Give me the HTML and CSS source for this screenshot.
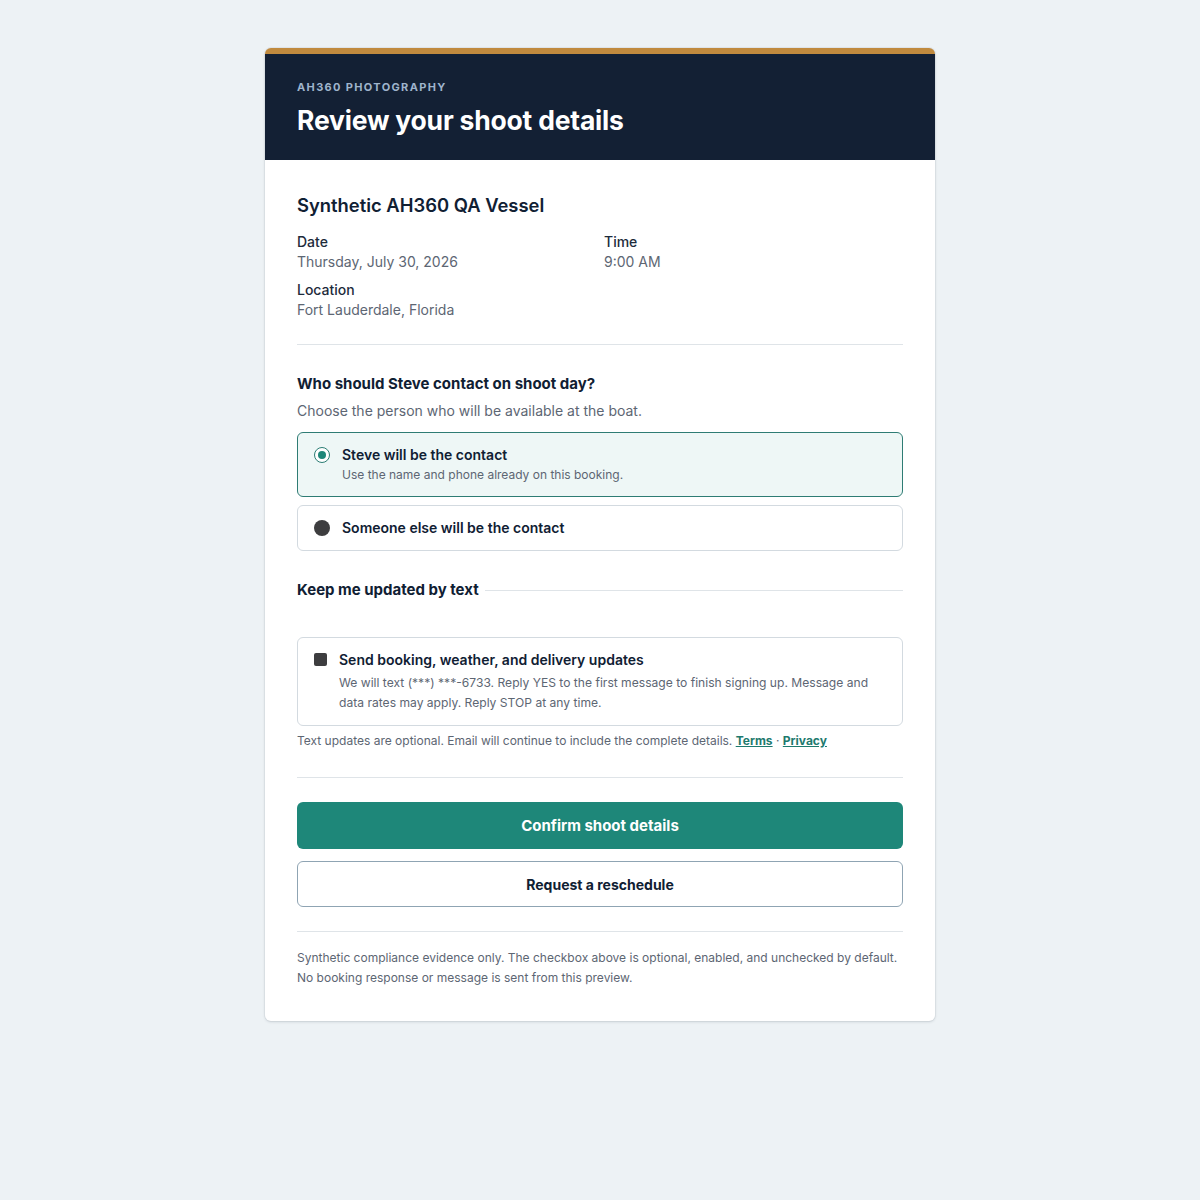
FILE: index.html
```html
<!DOCTYPE html>
<html lang="en">
<head>
<meta charset="utf-8">
<title>Review your shoot details</title>
<link rel="stylesheet" href="styles.css">
</head>
<body>
<main class="card">
  <header class="card-head">
    <p class="eyebrow">AH360 PHOTOGRAPHY</p>
    <h1 class="title">Review your shoot details</h1>
  </header>
  <section class="card-body">
    <h2 class="vessel">Synthetic AH360 QA Vessel</h2>
    <dl class="details">
      <div class="detail">
        <dt>Date</dt>
        <dd>Thursday, July 30, 2026</dd>
      </div>
      <div class="detail">
        <dt>Time</dt>
        <dd>9:00 AM</dd>
      </div>
      <div class="detail">
        <dt>Location</dt>
        <dd>Fort Lauderdale, Florida</dd>
      </div>
    </dl>

    <hr class="divider">

    <h3 class="question">Who should Steve contact on shoot day?</h3>
    <p class="hint">Choose the person who will be available at the boat.</p>

    <div class="options">
      <label class="option option-selected">
        <span class="radio radio-on"></span>
        <span class="option-text">
          <span class="option-title">Steve will be the contact</span>
          <span class="option-sub">Use the name and phone already on this booking.</span>
        </span>
      </label>
      <label class="option">
        <span class="radio radio-off"></span>
        <span class="option-text">
          <span class="option-title">Someone else will be the contact</span>
        </span>
      </label>
    </div>

    <div class="legend">Keep me updated by text</div>

    <label class="sms-box">
      <span class="checkbox"></span>
      <span class="option-text">
        <span class="option-title">Send booking, weather, and delivery updates</span>
        <span class="sms-desc">We will text (***) ***-6733. Reply YES to the first message to finish signing up. Message and data rates may apply. Reply STOP at any time.</span>
      </span>
    </label>
    <p class="note">Text updates are optional. Email will continue to include the complete details. <a href="#" class="link">Terms</a> · <a href="#" class="link">Privacy</a></p>

    <hr class="divider divider-actions">

    <div class="actions">
      <button class="btn btn-primary" type="button">Confirm shoot details</button>
      <button class="btn btn-secondary" type="button">Request a reschedule</button>
    </div>

    <hr class="divider divider-foot">

    <p class="foot">Synthetic compliance evidence only. The checkbox above is optional, enabled, and unchecked by default. No booking response or message is sent from this preview.</p>
  </section>
</main>
</body>
</html>
```

FILE: styles.css
```css
* { box-sizing: border-box; }

html, body {
  margin: 0;
  padding: 0;
}

body {
  background: #edf2f5;
  font-family: Inter, "Noto Sans", Arial, sans-serif;
  color: #102033;
  padding: 48px 0 60px;
}

.card {
  width: 670px;
  margin: 0 auto;
  background: #ffffff;
  border-radius: 6px;
  overflow: hidden;
  border-top: 6px solid #c08a3e;
  box-shadow: 0 1px 3px rgba(16, 32, 51, 0.14), 0 0 0 1px rgba(16, 32, 51, 0.04);
}

.card-head {
  background: #132034;
  padding: 26px 32px 23px;
}

.eyebrow {
  margin: 0;
  font-size: 11px;
  line-height: 14px;
  font-weight: 700;
  letter-spacing: 1.35px;
  color: #9fb4cc;
}

.title {
  margin: 9px 0 0;
  font-size: 26.5px;
  line-height: 34px;
  font-weight: 700;
  color: #ffffff;
  letter-spacing: -0.2px;
}

.card-body {
  padding: 32px 32px 33px;
}

.vessel {
  margin: 0;
  font-size: 18.4px;
  line-height: 26px;
  font-weight: 600;
  color: #102033;
}

.details {
  margin: 14px 0 0;
  display: grid;
  grid-template-columns: 1fr 1fr;
  column-gap: 8px;
  row-gap: 8px;
}

.detail dt {
  font-size: 14px;
  line-height: 20px;
  font-weight: 500;
  color: #1d2b3b;
}

.detail dd {
  margin: 0;
  font-size: 14px;
  line-height: 20px;
  color: #5d6673;
}

.divider {
  border: 0;
  border-top: 1px solid #dfe4e8;
  margin: 24px 0 0;
}

.question {
  margin: 28px 0 0;
  font-size: 15px;
  line-height: 22px;
  font-weight: 700;
  color: #102033;
}

.hint {
  margin: 6px 0 0;
  font-size: 14px;
  line-height: 20px;
  color: #5d6673;
}

.options {
  margin-top: 11px;
  display: flex;
  flex-direction: column;
  gap: 8px;
}

.option {
  display: flex;
  align-items: flex-start;
  gap: 12px;
  border: 1px solid #d3dae0;
  border-radius: 6px;
  padding: 12px 16px 12px;
  background: #ffffff;
}

.option-selected {
  background: #eef7f6;
  border-color: #2e7c74;
}

.radio {
  flex: none;
  width: 16px;
  height: 16px;
  border-radius: 50%;
  margin-top: 2px;
}

.radio-on {
  border: 1.5px solid #2b7d74;
  background: #ffffff;
  position: relative;
}

.radio-on::after {
  content: "";
  position: absolute;
  left: 2.5px;
  top: 2.5px;
  width: 8px;
  height: 8px;
  border-radius: 50%;
  background: #1e8779;
}

.radio-off {
  background: #3d3d3f;
}

.option-text {
  display: flex;
  flex-direction: column;
}

.option-title {
  font-size: 14px;
  line-height: 20px;
  font-weight: 600;
  color: #102033;
}

.option-sub {
  font-size: 12px;
  line-height: 18px;
  margin-top: 1px;
  color: #5d6673;
}

.legend {
  margin-top: 28px;
  display: flex;
  align-items: center;
  gap: 6px;
  font-size: 15px;
  line-height: 22px;
  font-weight: 700;
  color: #102033;
}

.legend::after {
  content: "";
  flex: 1;
  height: 1px;
  background: #dfe4e8;
}

.sms-box {
  margin-top: 36px;
  display: flex;
  align-items: flex-start;
  gap: 12px;
  border: 1px solid #d3dae0;
  border-radius: 6px;
  padding: 12px 16px 12px;
}

.checkbox {
  flex: none;
  width: 13px;
  height: 13px;
  margin-top: 3px;
  border-radius: 2px;
  background: #3d3d3f;
}

.sms-desc {
  margin-top: 3px;
  font-size: 12.1px;
  line-height: 20px;
  color: #5d6673;
}

.note {
  margin: 5px 0 0;
  font-size: 12px;
  line-height: 20px;
  color: #5d6673;
}

.link {
  color: #1e7a6e;
  font-weight: 700;
  text-decoration: underline;
}

.divider-actions {
  margin-top: 26px;
}

.actions {
  margin-top: 24px;
  display: flex;
  flex-direction: column;
  gap: 12px;
}

.btn {
  display: block;
  width: 100%;
  font-family: inherit;
  border-radius: 6px;
  cursor: pointer;
}

.btn-primary {
  height: 47px;
  background: #1e8779;
  border: 0;
  color: #ffffff;
  font-size: 15px;
  font-weight: 700;
}

.btn-secondary {
  height: 46px;
  background: #ffffff;
  border: 1px solid #8fa4b3;
  color: #102033;
  font-size: 14px;
  font-weight: 700;
}

.divider-foot {
  margin-top: 24px;
}

.foot {
  margin: 16px 0 0;
  font-size: 12px;
  line-height: 20px;
  color: #5d6673;
}
```
